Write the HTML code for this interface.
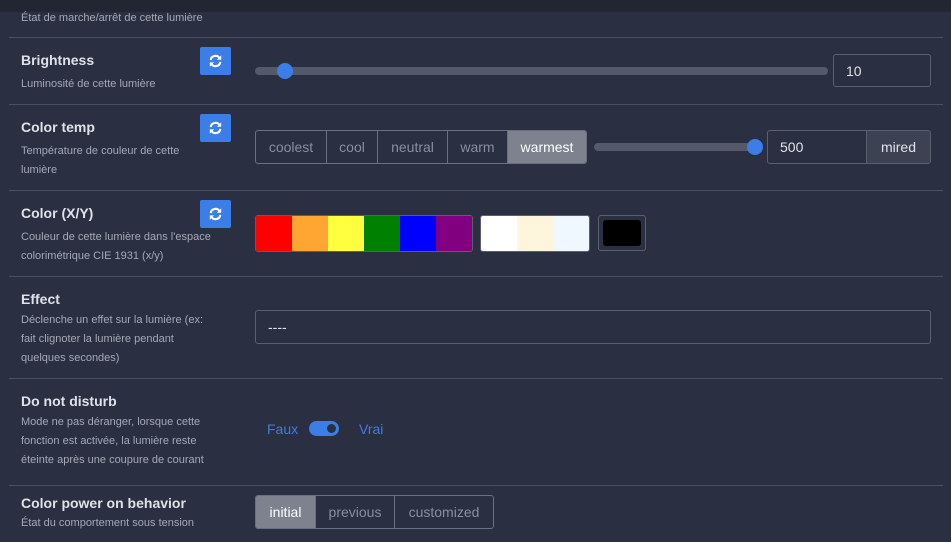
<!DOCTYPE html>
<html><head><meta charset="utf-8"><style>
body{margin:0;width:951px;height:542px;background:#2a2f42;font-family:"Liberation Sans",sans-serif;position:relative;overflow:hidden;color:#e2e4ea}
.top{position:absolute;left:0;top:0;width:951px;height:12px;background:#222633}
.a{position:absolute}
.hr{position:absolute;left:9px;width:934px;height:1px;background:#4a4f60}
.t{position:absolute;left:21px;font-size:14px;font-weight:bold;color:#dfe2e8}
.d{position:absolute;left:21px;font-size:11px;color:#a5a9b5;line-height:19px;width:192px}
.rb{position:absolute;left:200px;width:31px;height:28px;background:#3b7ee8;border-radius:2px}
.rb svg{position:absolute;left:8px;top:7px}
.track{position:absolute;height:8px;background:#545a6a;border-radius:4px}
.knob{position:absolute;width:16px;height:16px;background:#3b7ee8;border-radius:50%}
.inp{position:absolute;border:1px solid #5b6070;border-radius:3px;box-sizing:border-box;font-size:14px;color:#dfe2e8;padding-left:12px;display:flex;align-items:center}
.grp{position:absolute;display:flex;border:1px solid #6b7080;border-radius:3px;box-sizing:border-box;overflow:hidden}
.grp div{box-sizing:border-box;font-size:14px;color:#8a8f9c;display:flex;align-items:center;justify-content:center;border-right:1px solid #6b7080}
.grp div:last-child{border-right:none}
.grp .on{background:#7d828e;color:#fff}
.sw{position:absolute;display:flex;border:1px solid #5b6070;border-radius:3px;overflow:hidden}
.sw span{display:block;width:36px;height:35px}
</style></head><body>
<div class="top"></div>
<div class="d" style="top:9px;width:300px">État de marche/arrêt de cette lumière</div>
<div class="hr" style="top:37px"></div>

<div class="t" style="top:52px">Brightness</div>
<div class="d" style="top:75px">Luminosité de cette lumière</div>
<div class="rb" style="top:47px"><svg width="15" height="14" viewBox="0 0 16 16"><path d="M2.5 7A5.5 5.5 0 0 1 12.5 4.5M13.5 9A5.5 5.5 0 0 1 3.5 11.5" stroke="#fff" stroke-width="2.4" fill="none"/><path d="M14.5 1.5v5h-5zM1.5 14.5v-5h5z" fill="#fff"/></svg></div>
<div class="track" style="left:255px;top:67px;width:573px"></div>
<div class="knob" style="left:277px;top:63px"></div>
<div class="inp" style="left:833px;top:54px;width:98px;height:33px">10</div>
<div class="hr" style="top:104px"></div>

<div class="t" style="top:119px">Color temp</div>
<div class="d" style="top:142px">Température de couleur de cette lumière</div>
<div class="rb" style="top:114px"><svg width="15" height="14" viewBox="0 0 16 16"><path d="M2.5 7A5.5 5.5 0 0 1 12.5 4.5M13.5 9A5.5 5.5 0 0 1 3.5 11.5" stroke="#fff" stroke-width="2.4" fill="none"/><path d="M14.5 1.5v5h-5zM1.5 14.5v-5h5z" fill="#fff"/></svg></div>
<div class="grp" style="left:255px;top:130px;height:34px;width:332px">
<div style="width:71px">coolest</div><div style="width:51px">cool</div><div style="width:70px">neutral</div><div style="width:60px">warm</div><div class="on" style="width:78px">warmest</div></div>
<div class="track" style="left:594px;top:143px;width:168px"></div>
<div class="knob" style="left:747px;top:139px"></div>
<div class="inp" style="left:767px;top:130px;width:100px;height:34px;border-radius:3px 0 0 3px">500</div>
<div class="inp" style="left:866px;top:130px;width:65px;height:34px;background:#3d4252;border-radius:0 3px 3px 0;justify-content:center;padding:0">mired</div>
<div class="hr" style="top:190px"></div>

<div class="t" style="top:205px">Color (X/Y)</div>
<div class="d" style="top:228px;width:210px">Couleur de cette lumière dans l'espace colorimétrique CIE 1931 (x/y)</div>
<div class="rb" style="top:200px"><svg width="15" height="14" viewBox="0 0 16 16"><path d="M2.5 7A5.5 5.5 0 0 1 12.5 4.5M13.5 9A5.5 5.5 0 0 1 3.5 11.5" stroke="#fff" stroke-width="2.4" fill="none"/><path d="M14.5 1.5v5h-5zM1.5 14.5v-5h5z" fill="#fff"/></svg></div>
<div class="sw" style="left:255px;top:215px"><span style="background:#ff0000"></span><span style="background:#ffa531"></span><span style="background:#ffff40"></span><span style="background:#008000"></span><span style="background:#0000ff"></span><span style="background:#800080"></span></div>
<div class="sw" style="left:480px;top:215px"><span style="background:#fff"></span><span style="background:#fdf5dc"></span><span style="background:#f0f8ff"></span></div>
<div class="a" style="left:598px;top:215px;width:46px;height:34px;border:1px solid #5b6070;border-radius:3px"><div class="a" style="left:4px;top:4px;width:38px;height:26px;background:#000;border-radius:3px"></div></div>
<div class="hr" style="top:276px"></div>

<div class="t" style="top:291px">Effect</div>
<div class="d" style="top:311px">Déclenche un effet sur la lumière (ex: fait clignoter la lumière pendant quelques secondes)</div>
<div class="inp" style="left:255px;top:310px;width:676px;height:34px">----</div>
<div class="hr" style="top:378px"></div>

<div class="t" style="top:393px">Do not disturb</div>
<div class="d" style="top:413px">Mode ne pas déranger, lorsque cette fonction est activée, la lumière reste éteinte après une coupure de courant</div>
<div class="a" style="left:267px;top:421px;font-size:14px;color:#3b7ee8">Faux</div>
<div class="a" style="left:309px;top:421px;width:30px;height:15px;background:#3b7ee8;border-radius:8px"><div class="a" style="left:18px;top:3px;width:9px;height:9px;background:#2a2f42;border-radius:50%"></div></div>
<div class="a" style="left:359px;top:421px;font-size:14px;color:#3b7ee8">Vrai</div>
<div class="hr" style="top:485px"></div>

<div class="t" style="top:495px">Color power on behavior</div>
<div class="d" style="top:514px;width:300px">État du comportement sous tension</div>
<div class="grp" style="left:255px;top:495px;height:34px;width:239px">
<div class="on" style="width:60px">initial</div><div style="width:79px">previous</div><div style="width:98px">customized</div></div>
</body></html>
